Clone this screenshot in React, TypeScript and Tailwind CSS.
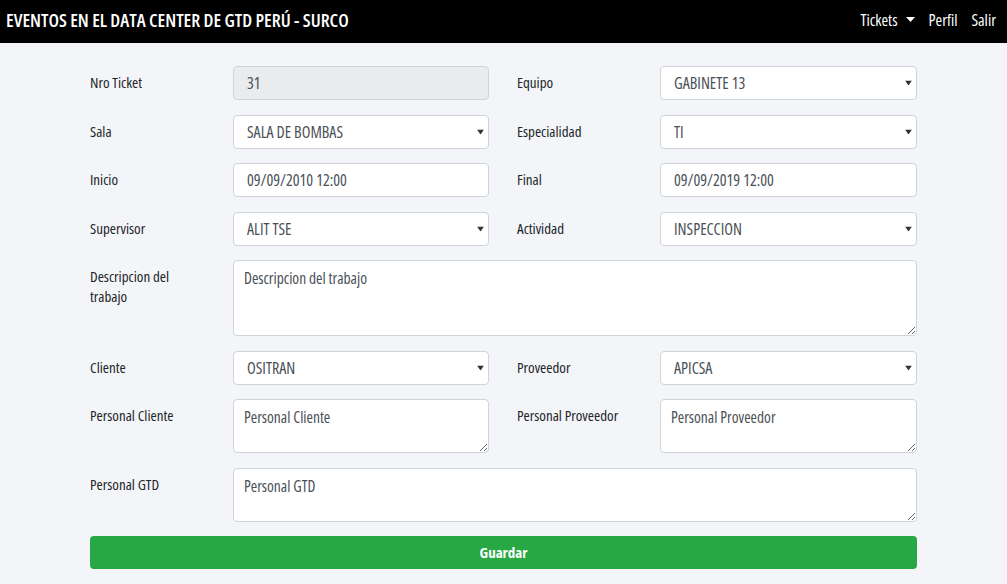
import React from "react";

const font = { fontFamily: '"Open Sans", "Roboto Condensed", sans-serif' };

const Arrow = () => (
  <svg className="pointer-events-none absolute right-[5px] top-1/2 -translate-y-1/2" width="7" height="5" viewBox="0 0 7 5">
    <path d="M0 0h7L3.5 5z" fill="#333" />
  </svg>
);

const Label = ({ children, gap }: { children: React.ReactNode; gap?: boolean }) => (
  <label
    className={
      "w-[143px] shrink-0 pr-[30px] pt-[6px] text-[15px] leading-5 font-medium text-[#212529] " + (gap ? "ml-[28px]" : "")
    }
  >
    {children}
  </label>
);

const base =
  "h-[34px] w-full rounded border border-[#ced4da] px-[13px] text-[16px] font-medium text-[#495057] outline-none font-stretch-condensed";

const Select = ({ value }: { value: string }) => (
  <div className="relative w-full">
    <select className={base + " appearance-none bg-white"} defaultValue={value} style={font}>
      <option>{value}</option>
    </select>
    <Arrow />
  </div>
);

const Area = ({ ph, h }: { ph: string; h: string }) => (
  <textarea
    placeholder={ph}
    className={
      "block w-full rounded border border-[#ced4da] bg-white px-[10px] py-[7px] text-[15.5px] leading-5 font-medium font-stretch-condensed text-[#495057] placeholder:text-[#495057] outline-none " +
      h
    }
    style={font}
  />
);

export default function App() {
  return (
    <div className="min-h-[584px] bg-[#f4f5f9] font-stretch-condensed" style={font}>
      <nav className="flex h-[43px] items-center justify-between bg-black pb-[4px] pl-[6px] pr-[11px] text-white">
        <h1 className="text-[18.5px] font-semibold">EVENTOS EN EL DATA CENTER DE GTD PERÚ - SURCO</h1>
        <div className="flex items-center gap-[14px] text-[16px] font-medium">
          <span className="flex items-center gap-[8px]">
            Tickets
            <svg width="9" height="5" viewBox="0 0 9 5">
              <path d="M0 0h9L4.5 5z" fill="#fff" />
            </svg>
          </span>
          <span>Perfil</span>
          <span>Salir</span>
        </div>
      </nav>

      <form className="ml-[90px] flex w-[827px] flex-col gap-[14.5px] pt-[23px]">
        <div className="flex">
          <Label>Nro Ticket</Label>
          <div className="w-[256px]">
            <input className={base + " bg-[#e9ecef]"} defaultValue="31" disabled style={font} />
          </div>
          <Label gap>Equipo</Label>
          <div className="w-[257px]">
            <Select value="GABINETE 13" />
          </div>
        </div>
        <div className="flex">
          <Label>Sala</Label>
          <div className="w-[256px]">
            <Select value="SALA DE BOMBAS" />
          </div>
          <Label gap>Especialidad</Label>
          <div className="w-[257px]">
            <Select value="TI" />
          </div>
        </div>
        <div className="flex">
          <Label>Inicio</Label>
          <div className="w-[256px]">
            <input className={base + " bg-white px-[11px]"} defaultValue="09/09/2010 12:00" style={font} />
          </div>
          <Label gap>Final</Label>
          <div className="w-[257px]">
            <input className={base + " bg-white px-[11px]"} defaultValue="09/09/2019 12:00" style={font} />
          </div>
        </div>
        <div className="flex">
          <Label>Supervisor</Label>
          <div className="w-[256px]">
            <Select value="ALIT TSE" />
          </div>
          <Label gap>Actividad</Label>
          <div className="w-[257px]">
            <Select value="INSPECCION" />
          </div>
        </div>
        <div className="flex">
          <Label>Descripcion del trabajo</Label>
          <div className="w-[684px]">
            <Area ph="Descripcion del trabajo" h="h-[76px]" />
          </div>
        </div>
        <div className="flex">
          <Label>Cliente</Label>
          <div className="w-[256px]">
            <Select value="OSITRAN" />
          </div>
          <Label gap>Proveedor</Label>
          <div className="w-[257px]">
            <Select value="APICSA" />
          </div>
        </div>
        <div className="flex">
          <Label>Personal Cliente</Label>
          <div className="w-[256px]">
            <Area ph="Personal Cliente" h="h-[54px]" />
          </div>
          <Label gap>
            <span className="whitespace-nowrap">Personal Proveedor</span>
          </Label>
          <div className="w-[257px]">
            <Area ph="Personal Proveedor" h="h-[54px]" />
          </div>
        </div>
        <div className="flex">
          <Label>Personal GTD</Label>
          <div className="w-[684px]">
            <Area ph="Personal GTD" h="h-[54px]" />
          </div>
        </div>
        <button
          type="button"
          className="h-[33px] w-full rounded bg-[#28a745] text-[15px] font-bold text-white font-stretch-condensed"
          style={font}
        >
          Guardar
        </button>
      </form>
    </div>
  );
}
